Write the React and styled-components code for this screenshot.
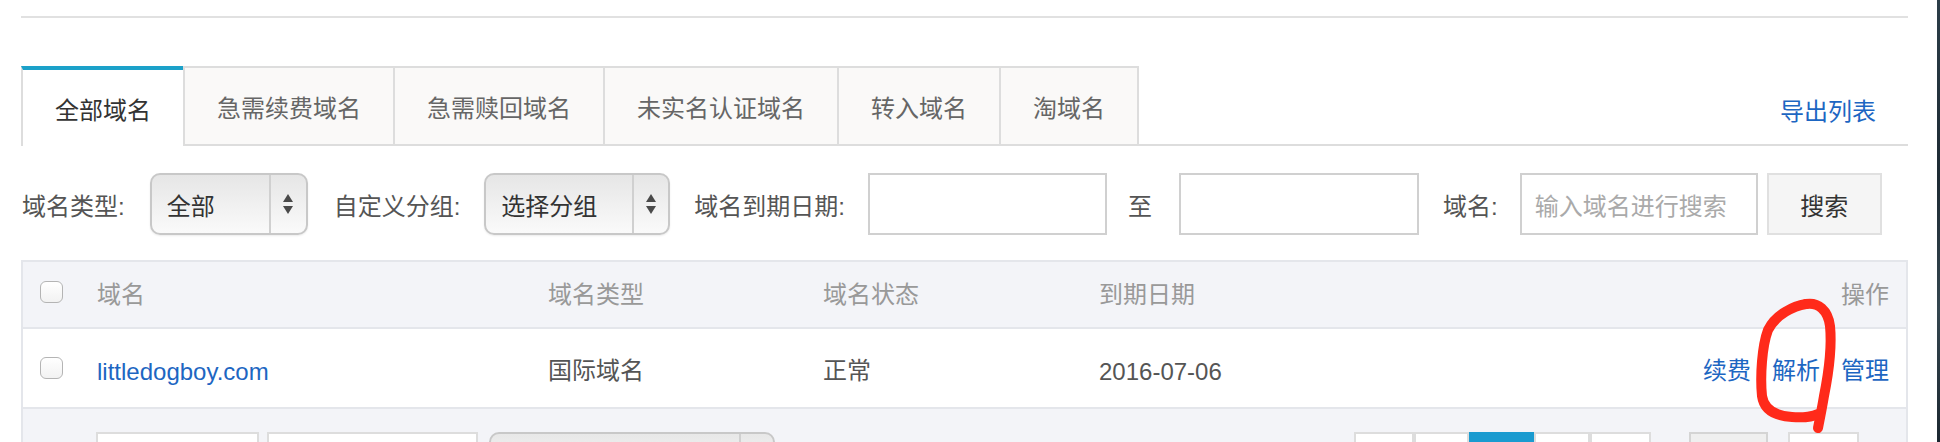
import React from 'react';
import styled, { createGlobalStyle } from 'styled-components';

const GlobalStyle = createGlobalStyle`
  html, body { margin: 0; padding: 0; background: #fff; overflow: hidden; }
  body {
    font-family: "Liberation Sans", "Noto Sans CJK SC", sans-serif;
    font-size: 24px;
    color: #555;
  }
  * { box-sizing: border-box; }
`;

const Screen = styled.div`
  position: relative;
  display: flex;
  width: 1940px;
  height: 442px;
  overflow: hidden;
`;

const Page = styled.div`
  flex: 1;
  min-width: 0;
  padding: 16px 29px 0 21px;
`;

const EdgeStrip = styled.div`
  width: 3px;
  background: linear-gradient(to bottom, #2b3d48, #1d2a33 40%, #34464f 70%, #1c2730);
`;

const TopRule = styled.div`
  height: 2px;
  background: #e1e1e1;
`;

const TabBar = styled.div`
  margin-top: 48px;
  height: 80px;
  display: flex;
  align-items: flex-end;
  border-bottom: 2px solid #dddddd;
`;

const Tab = styled.div`
  height: ${(p) => (p.$active ? '80px' : '78px')};
  margin-bottom: ${(p) => (p.$active ? '-2px' : '0')};
  padding: 0 32px;
  display: flex;
  align-items: center;
  white-space: nowrap;
  background: ${(p) => (p.$active ? '#fff' : '#faf9f8')};
  color: ${(p) => (p.$active ? '#333' : '#666')};
  border-top: ${(p) => (p.$active ? '4px solid #1ba1c9' : '2px solid #dddddd')};
  border-left: 2px solid #dddddd;
  border-right: ${(p) => (p.$last ? '2px solid #dddddd' : 'none')};
  position: relative;
  z-index: ${(p) => (p.$active ? 1 : 0)};
`;

const ExportLink = styled.a`
  margin-left: auto;
  margin-right: 32px;
  align-self: center;
  margin-top: 8px;
  color: #1d66c2;
  text-decoration: none;
  white-space: nowrap;
`;

const FilterRow = styled.div`
  margin-top: 27px;
  height: 62px;
  display: flex;
  align-items: center;
`;

const Label = styled.span`
  color: #555;
  white-space: nowrap;
  margin-left: ${(p) => p.$ml || 0}px;
  margin-right: ${(p) => p.$mr || 23}px;
`;

const SelectBox = styled.div`
  width: ${(p) => p.$w}px;
  height: 62px;
  display: flex;
  border: 2px solid #c8c8c8;
  border-radius: 10px;
  background: linear-gradient(to bottom, #e6e6e6 0%, #efefef 45%, #fafafa 100%);
  box-shadow: 0 1px 2px rgba(0, 0, 0, 0.08);
  flex-shrink: 0;
`;

const SelectValue = styled.div`
  flex: 1;
  display: flex;
  align-items: center;
  padding-left: ${(p) => p.$pl || 15}px;
  color: #333;
  white-space: nowrap;
`;

const SelectArrows = styled.div`
  width: ${(p) => p.$w || 36}px;
  border-left: 2px solid #d0d0d0;
  display: flex;
  align-items: center;
  justify-content: center;
`;

const TextInput = styled.div`
  width: ${(p) => p.$w}px;
  height: 62px;
  border: 2px solid #d0d0d0;
  background: #fff;
  display: flex;
  align-items: center;
  padding-left: 13px;
  color: #aaa;
  white-space: nowrap;
  flex-shrink: 0;
`;

const Button = styled.div`
  width: 115px;
  height: 62px;
  margin-left: 9px;
  border: 2px solid #e0e0e0;
  background: #f5f5f5;
  color: #333;
  display: flex;
  align-items: center;
  justify-content: center;
  flex-shrink: 0;
`;

const Table = styled.div`
  margin-top: 25px;
  border: 2px solid #e4e6eb;
  border-bottom: none;
`;

const Row = styled.div`
  display: grid;
  grid-template-columns: 74px 451px 275px 276px 1fr;
  align-items: center;
  height: ${(p) => (p.$head ? 67 : 80)}px;
  padding-bottom: ${(p) => (p.$head ? 5 : 0)}px;
  background: ${(p) => (p.$head ? '#f3f4f8' : '#fff')};
  border-bottom: 2px solid #e4e6eb;
  color: ${(p) => (p.$head ? '#999' : '#555')};
  white-space: nowrap;
`;

const CheckCell = styled.div`
  padding-left: 17px;
  display: flex;
  align-items: center;
`;

const Checkbox = styled.span`
  width: 23px;
  height: 22px;
  border: 1.5px solid #b4b4b4;
  border-radius: 6px;
  background: linear-gradient(to bottom, #ffffff, #f2f2f2);
`;

const Cell = styled.div`
  padding-top: ${(p) => (p.$latin ? 8 : 0)}px;
  margin-right: ${(p) => (p.$push ? 'auto' : '0')};
`;

const ActionCell = styled.div`
  display: flex;
  align-items: center;
  justify-content: flex-end;
  gap: 21px;
  padding-right: 17px;
`;

const Link = styled.a`
  color: #1d66c2;
  text-decoration: none;
`;

const Footer = styled.div`
  background: #f3f4f8;
  height: 90px;
  padding: 23px 47px 0 73px;
  display: flex;
  align-items: flex-start;
`;

const FooterGroup = styled.div`
  display: flex;
  gap: ${(p) => p.$gap || 0}px;
  margin-left: ${(p) => (p.$right ? 'auto' : '0')};
`;

const PageBox = styled.div`
  width: ${(p) => p.$w}px;
  height: 60px;
  background: ${(p) => p.$bg || '#fff'};
  border: 2px solid ${(p) => p.$border || '#dddddd'};
  margin-left: ${(p) => p.$ml || 0}px;
  flex-shrink: 0;
`;

const RoundSelect = styled.div`
  width: 286px;
  height: 60px;
  margin-left: 11px;
  border: 2px solid #c8c8c8;
  border-radius: 10px;
  background: linear-gradient(to bottom, #e8e8e8, #fafafa);
  display: flex;
  justify-content: flex-end;
`;

const RoundDivider = styled.div`
  width: 34px;
  border-left: 2px solid #d0d0d0;
`;

const Annotation = styled.svg`
  position: absolute;
  left: 1752px;
  top: 296px;
  pointer-events: none;
`;

const Arrows = () => (
  <svg width="12" height="24" viewBox="0 0 12 24">
    <path d="M6 2 L11 10 L1 10 Z" fill="#4a4a4a" />
    <path d="M1 14 L11 14 L6 22 Z" fill="#4a4a4a" />
  </svg>
);

export default function App() {
  const tabs = ['全部域名', '急需续费域名', '急需赎回域名', '未实名认证域名', '转入域名', '淘域名'];
  return (
    <Screen>
      <GlobalStyle />
      <Page>
        <TopRule />
        <TabBar>
          {tabs.map((t, i) => (
            <Tab key={t} $active={i === 0} $last={i === tabs.length - 1}>
              {t}
            </Tab>
          ))}
          <ExportLink>导出列表</ExportLink>
        </TabBar>

        <FilterRow>
          <Label $ml={1} $mr={25}>域名类型:</Label>
          <SelectBox $w={158}>
            <SelectValue>全部</SelectValue>
            <SelectArrows $w={37}>
              <Arrows />
            </SelectArrows>
          </SelectBox>
          <Label $ml={26} $mr={24}>自定义分组:</Label>
          <SelectBox $w={186}>
            <SelectValue>选择分组</SelectValue>
            <SelectArrows $w={36}>
              <Arrows />
            </SelectArrows>
          </SelectBox>
          <Label $ml={24}>域名到期日期:</Label>
          <TextInput $w={239} />
          <Label $ml={21} $mr={27}>至</Label>
          <TextInput $w={240} />
          <Label $ml={24} $mr={22}>域名:</Label>
          <TextInput $w={238}>输入域名进行搜索</TextInput>
          <Button>搜索</Button>
        </FilterRow>

        <Table>
          <Row $head>
            <CheckCell>
              <Checkbox />
            </CheckCell>
            <Cell>域名</Cell>
            <Cell>域名类型</Cell>
            <Cell>域名状态</Cell>
            <ActionCell>
              <Cell $push>到期日期</Cell>
              <span>操作</span>
            </ActionCell>
          </Row>
          <Row>
            <CheckCell>
              <Checkbox />
            </CheckCell>
            <Cell $latin>
              <Link>littledogboy.com</Link>
            </Cell>
            <Cell>国际域名</Cell>
            <Cell>正常</Cell>
            <ActionCell>
              <Cell $push $latin>2016-07-06</Cell>
              <Link>续费</Link>
              <Link>解析</Link>
              <Link>管理</Link>
            </ActionCell>
          </Row>
          <Footer>
            <FooterGroup $gap={8}>
              <PageBox $w={163} />
              <PageBox $w={211} />
            </FooterGroup>
            <RoundSelect>
              <RoundDivider />
            </RoundSelect>
            <FooterGroup $right>
              <PageBox $w={60} />
              <PageBox $w={55} />
              <PageBox $w={65} $bg="#1a9bd0" $border="#1a9bd0" />
              <PageBox $w={56} />
              <PageBox $w={61} />
              <PageBox $w={79} $ml={38} $bg="#efefef" $border="#d4d4d4" />
              <PageBox $w={71} $ml={20} />
            </FooterGroup>
          </Footer>
        </Table>
      </Page>
      <EdgeStrip />
      <Annotation width="95" height="142" viewBox="0 0 95 142">
        <g fill="none" stroke="#ff2a1a" strokeWidth="10" strokeLinecap="round" strokeLinejoin="round">
          <path d="M54 8 C66 6 76 14 78 30 C80 50 76 80 72 100 C70 112 68 122 66 132" />
          <path d="M54 8 C42 10 24 18 16 34 C10 50 8 80 10 100 C12 114 24 120 40 121 C52 122 62 120 66 118" />
        </g>
      </Annotation>
    </Screen>
  );
}
